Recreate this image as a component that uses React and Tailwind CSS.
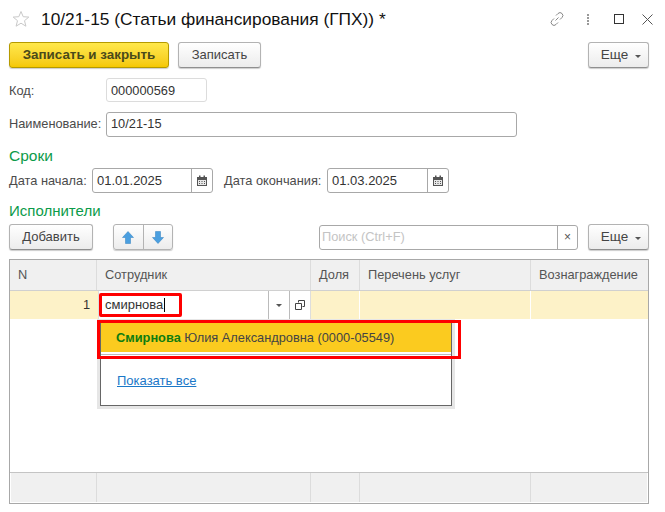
const F = "font-['Liberation_Sans',Arial,sans-serif]";

function Btn({ className = "", children }) {
  return (
    <div className={"flex h-[26px] items-center justify-center rounded-[3px] border border-[#b3b3b3] border-b-[#8f8f8f] bg-gradient-to-b from-white to-[#ececec] text-[13px] text-[#444] shadow-[0_1px_1px_#ccc] " + className}>
      {children}
    </div>
  );
}

function More() {
  return (
    <Btn className="w-[61px] gap-[7px] pl-[5px]">
      <span className="text-[13.500px]">Еще</span>
      <span className="mt-[2px] h-0 w-0 border-x-[3px] border-t-[3px] border-x-transparent border-t-[#555]" />
    </Btn>
  );
}

function CalIcon() {
  return (
    <svg width="12" height="12" viewBox="0 0 12 12" fill="none">
      <rect x="1" y="2" width="10" height="9" fill="#555" />
      <rect x="2" y="5" width="8" height="5" fill="#e8e8e8" />
      <rect x="3" y="0.5" width="1.5" height="2.5" fill="#555" />
      <rect x="7.5" y="0.5" width="1.5" height="2.5" fill="#555" />
      <path d="M3 6h1v1H3zM5.5 6h1v1h-1zM8 6h1v1H8zM3 8h1v1H3zM5.5 8h1v1h-1zM8 8h1v1H8z" fill="#555" />
    </svg>
  );
}

function DateField({ value, className = "" }) {
  return (
    <div className={"flex h-[25px] rounded-[3px] border border-[#a8a8a8] bg-white " + className}>
      <div className="flex flex-1 items-center pl-[4px] text-[13px] text-[#333]">{value}</div>
      <div className="flex w-[21px] items-center justify-center border-l border-[#a8a8a8]">
        <CalIcon />
      </div>
    </div>
  );
}

function Arrow({ down }) {
  return (
    <svg width="12" height="13" viewBox="0 0 12 13" className={down ? "rotate-180" : ""}>
      <path d="M6 .5 11.5 6.5H8.5V12.5H3.5V6.5H.5Z" fill="#4a9fe0" stroke="#2f7fbf" strokeWidth=".5" />
    </svg>
  );
}

const cols = "grid grid-cols-[87px_214px_49px_171px_1fr]";

function HeadCell({ children, className = "" }) {
  return (
    <div className={"flex items-center bg-[#f0f0f0] pl-[8px] text-[12.800px] text-[#555] border-r border-[#dcdcdc] last:border-r-0 " + className}>
      {children}
    </div>
  );
}

export default function App() {
  return (
    <div className={"relative flex h-[512px] w-[665px] flex-col overflow-hidden bg-white pl-[9px] pr-[16px] text-[12.800px] " + F}>
      {/* Title */}
      <div className="flex h-[42px] shrink-0 items-center pb-[3px]">
        <svg width="18" height="18" viewBox="0 0 18 18" className="ml-[3px] mt-[-1px]" fill="none">
          <path d="M9 1.5l2.2 5.2 5.6.4-4.3 3.6 1.4 5.5L9 13.2l-4.9 3 1.4-5.5L1.200 7.100l5.600-.4Z" stroke="#c9c9c9" strokeWidth="1" />
        </svg>
        <span className="ml-[11px] text-[17.330px] text-[#111]">10/21-15 (Статьи финансирования (ГПХ)) *</span>
        <div className="ml-auto mt-[-1px] flex items-center">
          <svg width="16" height="16" viewBox="0 0 16 16" fill="none" stroke="#888" strokeWidth="1">
            <path d="M6.500 9.500 9.500 6.500M7 4.500l2-2a2.500 2.500 0 0 1 4 4l-2 2M9 11.500l-2 2a2.500 2.500 0 0 1-4-4l2-2" />
          </svg>
          <div className="ml-[22px] flex flex-col gap-[1px]">
            <span className="size-[2px] bg-[#999]" />
            <span className="size-[2px] bg-[#999]" />
            <span className="size-[2px] bg-[#999]" />
            <span className="size-[2px] bg-[#999]" />
          </div>
          <div className="ml-[25px] size-[10px] border border-[#333]" />
          <svg width="11" height="11" viewBox="0 0 11 11" className="ml-[18px] mr-[-4px]" stroke="#555" fill="none">
            <path d="M.5.500l10 10M10.500.500l-10 10" />
          </svg>
        </div>
      </div>

      {/* Command bar */}
      <div className="flex shrink-0">
        <div className="flex h-[26px] w-[160px] items-center justify-center rounded-[3px] border border-[#b59a00] bg-gradient-to-b from-[#ffe84a] to-[#f5c800] pt-[1px] text-[13.400px] font-bold text-[#4a4a1a] shadow-[0_1px_1px_#ccc]">
          Записать и закрыть
        </div>
        <Btn className="ml-[9px] w-[83px]">Записать</Btn>
        <div className="ml-auto"><More /></div>
      </div>

      {/* Code */}
      <div className="mt-[10px] flex h-[24px] shrink-0 items-center">
        <span className="w-[97px] pt-[1px] text-[#4b4b4b]">Код:</span>
        <div className="flex h-[24px] w-[101px] items-center rounded-[3px] border border-[#dcdcdc] pl-[4px] pt-[1px] text-[#333]">000000569</div>
      </div>

      {/* Name */}
      <div className="mt-[10px] flex h-[24px] shrink-0 items-center">
        <span className="w-[97px] text-[#4b4b4b]">Наименование:</span>
        <div className="flex h-[25px] w-[411px] items-center rounded-[3px] border border-[#a8a8a8] pl-[4px] text-[#333]">10/21-15</div>
      </div>

      <div className="mt-[10px] h-[19px] shrink-0 text-[15.500px] leading-[19px] text-[#0c9b4a]">Сроки</div>

      {/* Dates */}
      <div className="mt-[3px] flex h-[25px] shrink-0 items-center">
        <span className="w-[83px] text-[#4b4b4b]">Дата начала:</span>
        <DateField value="01.01.2025" className="w-[121px]" />
        <span className="ml-[11px] w-[103px] text-[#4b4b4b]">Дата окончания:</span>
        <DateField value="01.03.2025" className="w-[122px]" />
      </div>

      <div className="mt-[8px] h-[19px] shrink-0 text-[15px] leading-[19px] text-[#0c9b4a]">Исполнители</div>

      {/* Table bar */}
      <div className="mt-[4px] flex h-[26px] shrink-0 items-center">
        <Btn className="w-[84px]">Добавить</Btn>
        <div className="ml-[20px] flex h-[26px] w-[60px] rounded-[3px] border border-[#b3b3b3] bg-gradient-to-b from-white to-[#ececec] shadow-[0_1px_1px_#ccc]">
          <div className="flex flex-1 items-center justify-center border-r border-[#b3b3b3]"><Arrow /></div>
          <div className="flex flex-1 items-center justify-center"><Arrow down /></div>
        </div>
        <div className="ml-[146px] flex h-[25px] w-[259px] rounded-[3px] border border-[#a8a8a8]">
          <div className="flex flex-1 items-center pl-[2px] text-[#c4c4c4]">Поиск (Ctrl+F)</div>
          <div className="flex w-[20px] items-center justify-center border-l border-[#a8a8a8] text-[12px] text-[#555]">×</div>
        </div>
        <div className="ml-auto"><More /></div>
      </div>

      {/* Table */}
      <div className="mt-[9px] flex h-[245px] shrink-0 flex-col border border-[#a8a8a8] bg-white">
        <div className={cols + " h-[31px] shrink-0 border-b border-[#d0d0d0]"}>
          <HeadCell>N</HeadCell>
          <HeadCell>Сотрудник</HeadCell>
          <HeadCell>Доля</HeadCell>
          <HeadCell>Перечень услуг</HeadCell>
          <HeadCell>Вознаграждение</HeadCell>
        </div>
        <div className={cols + " h-[28px] shrink-0 bg-[#fdf2c8]"}>
          <div className="flex items-center justify-end pr-[7px] text-[#333]">1</div>
          <div className="ml-[1px] flex items-center border-x border-[#ddd] bg-white">
            <div className="flex-1" />
            <div className="flex h-full w-[21px] items-center justify-center border-l border-[#bbb]">
              <span className="h-0 w-0 border-x-[3px] border-t-[3px] border-x-transparent border-t-[#555]" />
            </div>
            <div className="flex h-full w-[21px] items-center justify-center border-l border-[#bbb]">
              <svg width="10" height="10" viewBox="0 0 10 10" fill="none" stroke="#444">
                <path d="M3.500 2.500V.500h6v6h-2M.500 3.500h6v6h-6z" />
              </svg>
            </div>
          </div>
          <div className="border-r border-white" />
          <div className="border-r border-white" />
          <div />
        </div>
        <div className="flex-1" />
        <div className={cols + " h-[31px] shrink-0 border-t border-[#c4c4c4] bg-white pb-[1px]"}>
          <HeadCell className="ml-[1px]" />
          <HeadCell />
          <HeadCell />
          <HeadCell />
          <HeadCell className="mr-[1px]" />
        </div>
      </div>

      {/* Editor text with its red highlight */}
      <div className="absolute left-[99px] top-[293px] flex h-[24px] w-[83px] items-center rounded-[2px] border-[3px] border-[#fe0000] pl-[3px] text-[13px] text-[#333]">
        смирнова<span className="ml-[1px] h-[14px] w-[1px] bg-black" />
      </div>

      {/* Dropdown */}
      <div className="absolute left-[100px] top-[322px] h-[84px] w-[352px] border border-[#666] bg-white shadow-[0_0_0_3px_#e6e6e6]">
        <div className="flex h-[29px] items-center bg-[#fbcb1f] pl-[15px] text-[#444]">
          <span className="font-bold text-[#0f7d10]">Смирнова</span>&nbsp;Юлия Александровна (0000-05549)
        </div>
        <div className="mt-[2px] h-[1px] bg-[#bbb]" />
        <div className="mt-[16px] pl-[16px] text-[13px] text-[#1b78c8] underline">Показать все</div>
      </div>
      <div className="absolute left-[97px] top-[320px] h-[39px] w-[364px] border-[3px] border-[#fe0000]" />
    </div>
  );
}
